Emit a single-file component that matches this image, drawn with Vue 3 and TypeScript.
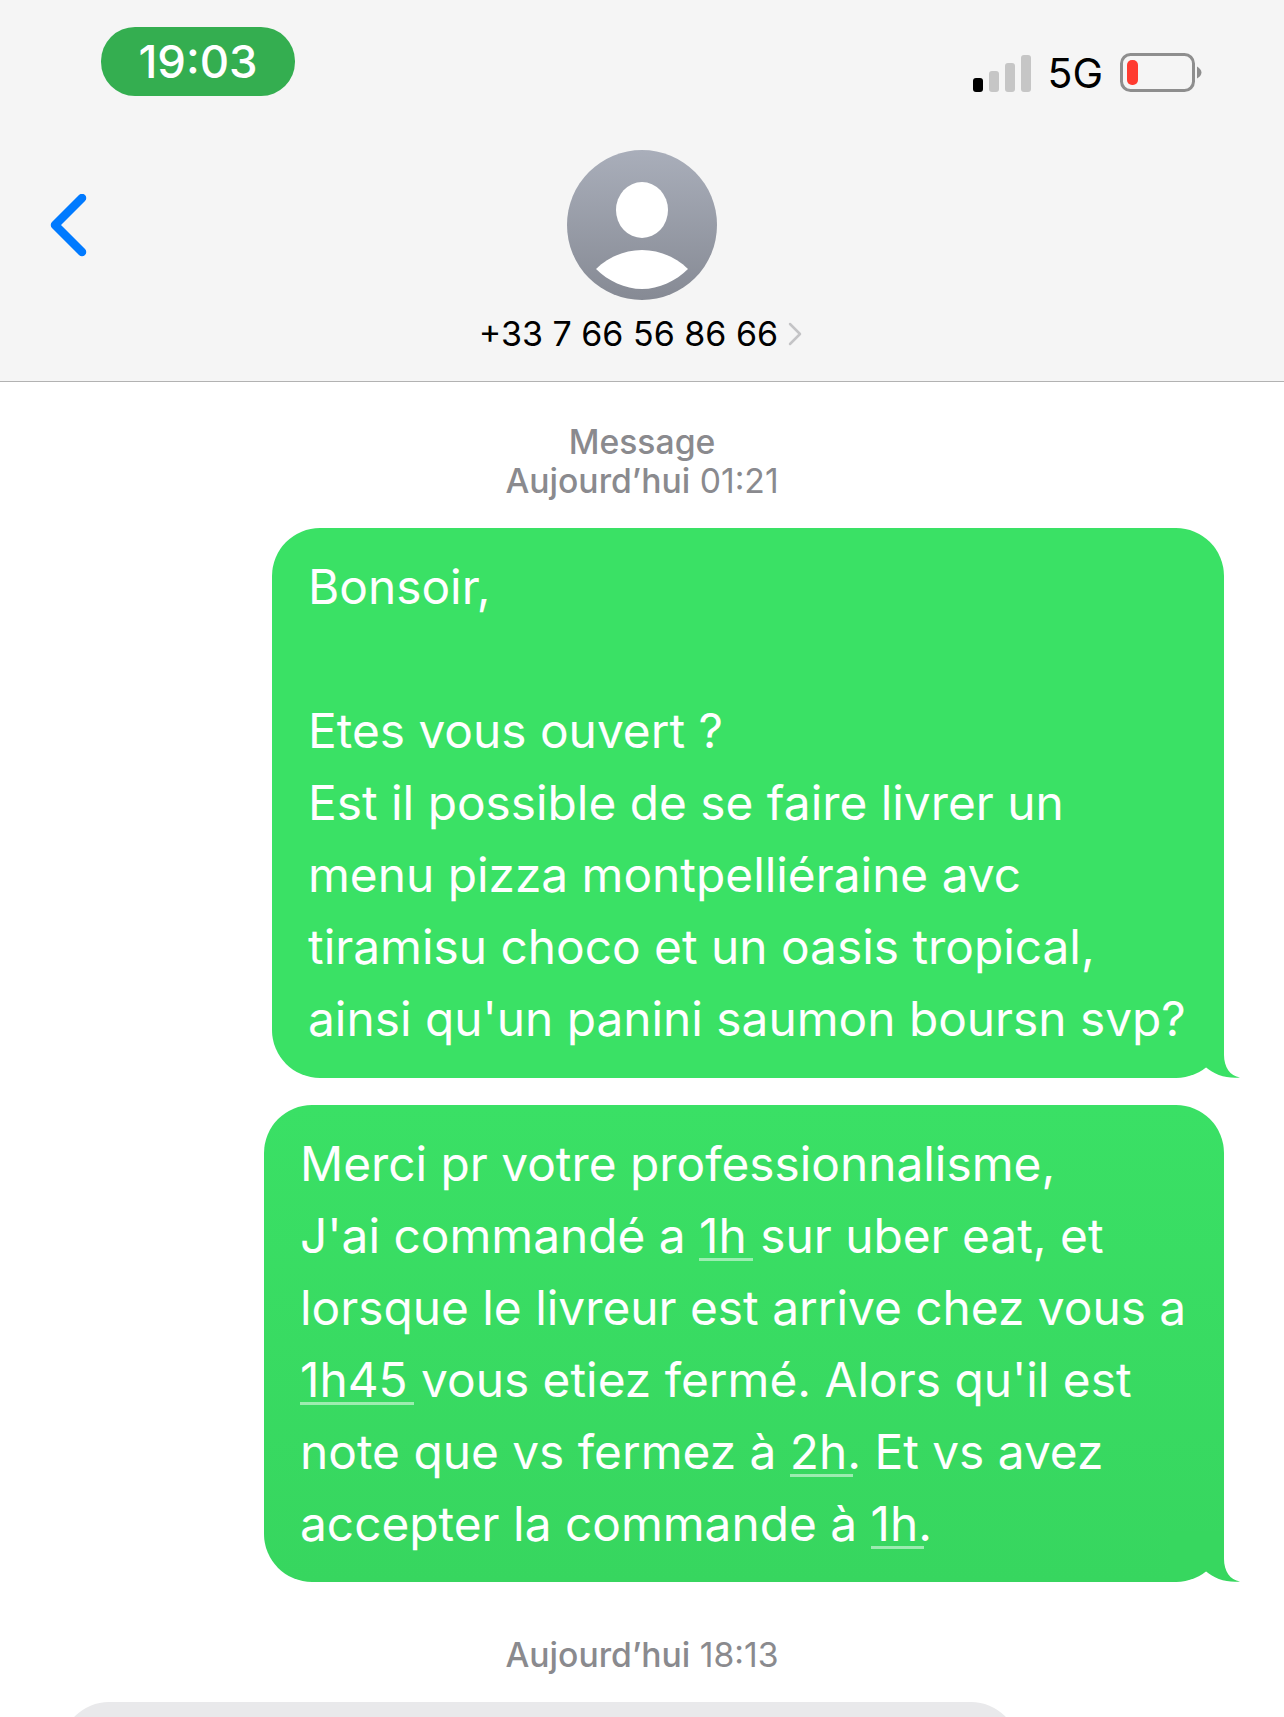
<template>
  <div class="screen">
    <header class="top">
      <div class="status">
        <div class="clock">19:03</div>
        <div class="indicators">
          <div class="signal">
            <span v-for="(h, i) in signalBars" :key="i" class="bar" :class="{ on: i === 0 }" :style="{ height: h + 'px' }"></span>
          </div>
          <span class="net">5G</span>
          <svg class="battery" width="82" height="40" viewBox="0 0 82 40">
            <rect x="1.5" y="1.5" width="72" height="36" rx="9" fill="none" stroke="#8e8e8e" stroke-width="3" />
            <rect x="7" y="7" width="11" height="25" rx="5" fill="#ff3b30" />
            <path d="M77 13.5 C79.5 15 81.5 17 81.5 19.5 C81.5 22 79.5 24 77 25.5 Z" fill="#8e8e8e" />
          </svg>
        </div>
      </div>
      <div class="contact">
        <svg class="back" width="40" height="64" viewBox="0 0 40 64">
          <path d="M34 4 L7 31 L34 58" fill="none" stroke="#007aff" stroke-width="8.5" stroke-linecap="round" stroke-linejoin="round" />
        </svg>
        <svg class="avatar" width="150" height="150" viewBox="0 0 150 150">
          <defs>
            <linearGradient id="avatarFill" x1="0" y1="0" x2="0" y2="1">
              <stop offset="0" stop-color="#a9aeba" />
              <stop offset="1" stop-color="#868a94" />
            </linearGradient>
          </defs>
          <circle cx="75" cy="75" r="75" fill="url(#avatarFill)" />
          <ellipse cx="75" cy="60" rx="26" ry="28" fill="#fff" />
          <path d="M29 119 C41 107 58 100 75 100 C92 100 109 107 121 119 C109 131 92 139 75 139 C58 139 41 131 29 119 Z" fill="#fff" />
        </svg>
        <div class="phone">
          <span>+33 7 66 56 86 66</span>
          <svg width="14" height="24" viewBox="0 0 14 24">
            <path d="M2 2 L12 12 L2 22" fill="none" stroke="#c4c4c6" stroke-width="2.5" stroke-linecap="round" stroke-linejoin="round" />
          </svg>
        </div>
      </div>
    </header>

    <main class="thread">
      <div class="meta first">
        <div><b>Message</b></div>
        <div><b>Aujourd’hui</b> 01:21</div>
      </div>

      <div class="bubble one">
        <svg class="tail" width="70" height="52" viewBox="0 0 70 52">
          <path d="M0 0 H54 V28 C54 40 60 49 70 50.5 C58 52 44 48 35 39.5 C28 46 18 50.5 0 50.5 Z" fill="#3ae165" />
        </svg>
        <div class="text">
          <div>Bonsoir,</div>
          <div>&nbsp;</div>
          <div>Etes vous ouvert ?</div>
          <div>Est il possible de se faire livrer un</div>
          <div>menu pizza montpelliéraine avc</div>
          <div>tiramisu choco et un oasis tropical,</div>
          <div>ainsi qu'un panini saumon boursn svp?</div>
        </div>
      </div>

      <div class="bubble two">
        <svg class="tail" width="70" height="52" viewBox="0 0 70 52">
          <path d="M0 0 H54 V28 C54 40 60 49 70 50.5 C58 52 44 48 35 39.5 C28 46 18 50.5 0 50.5 Z" fill="#37d75f" />
        </svg>
        <div class="text">
          <div>Merci pr votre professionnalisme,</div>
          <div>J'ai commandé a <span class="link">1h</span> sur uber eat, et</div>
          <div>lorsque le livreur est arrive chez vous a</div>
          <div><span class="link">1h45</span> vous etiez fermé. Alors qu'il est</div>
          <div>note que vs fermez à <span class="link">2h</span>. Et vs avez</div>
          <div>accepter la commande à <span class="link">1h</span>.</div>
        </div>
      </div>

      <div class="meta second">
        <div><b>Aujourd’hui</b> 18:13</div>
      </div>

      <div class="incoming"></div>
    </main>
  </div>
</template>

<script setup lang="ts">
const signalBars: number[] = [14, 21, 29, 37]
</script>

<style>
html,
body {
  margin: 0;
  background: #fff;
}
</style>

<style scoped>
.screen {
  width: 1284px;
  height: 1717px;
  overflow: hidden;
  background: #fff;
  font-family: Inter, "Liberation Sans", sans-serif;
}

.top {
  height: 382px;
  box-sizing: border-box;
  background: #f5f5f5;
  border-bottom: 1px solid #b2b2b2;
  padding-top: 27px;
}

.status {
  display: flex;
  justify-content: space-between;
  padding: 0 82px 0 101px;
}

.clock {
  width: 194px;
  height: 69px;
  border-radius: 34px;
  background: #34ae50;
  color: #fff;
  font-size: 45.5px;
  font-weight: 500;
  line-height: 69px;
  text-align: center;
}

.indicators {
  display: flex;
  align-items: center;
  height: 40px;
  margin-top: 26px;
}

.signal {
  display: flex;
  align-items: flex-end;
  gap: 6px;
  height: 37px;
}

.bar {
  width: 10px;
  border-radius: 3px;
  background: #c6c6c6;
}

.bar.on {
  background: #000;
}

.net {
  margin-left: 16px;
  font-size: 41px;
  line-height: 40px;
  color: #000;
}

.battery {
  margin-left: 17px;
}

.contact {
  position: relative;
  display: flex;
  flex-direction: column;
  align-items: center;
  margin-top: 54px;
}

.back {
  position: absolute;
  left: 48px;
  top: 44px;
}

.phone {
  display: flex;
  align-items: center;
  gap: 10px;
  margin-top: 14px;
  margin-left: -3px;
  font-size: 34px;
  line-height: 40px;
  color: #000;
}

.thread {
  display: flex;
  flex-direction: column;
  align-items: flex-end;
}

.meta {
  align-self: center;
  font-size: 33.7px;
  line-height: 39px;
  text-align: center;
  color: #8a8a8e;
}

.meta b {
  font-weight: 500;
}

.meta.first {
  margin-top: 40px;
}

.meta.second {
  margin-top: 53px;
}

.bubble {
  position: relative;
  box-sizing: border-box;
  margin-right: 60px;
  padding: 23px 0 0 36px;
  border-radius: 48px;
  color: #fff;
  font-size: 47.8px;
  line-height: 72px;
  white-space: nowrap;
}

.bubble.one {
  width: 952px;
  height: 550px;
  margin-top: 28px;
  background: #3ae165;
}

.bubble.two {
  width: 960px;
  height: 477px;
  margin-top: 27px;
  background: linear-gradient(#3ae065, #37d65f);
}

.text {
  position: relative;
}

.link {
  padding-right: 6px;
  margin-right: -6px;
  background: linear-gradient(rgba(255, 255, 255, 0.5), rgba(255, 255, 255, 0.5)) no-repeat 0 calc(100% - 4px) / 100% 3px;
}

.tail {
  position: absolute;
  right: -16px;
  bottom: -1px;
}

.incoming {
  align-self: flex-start;
  width: 958px;
  height: 120px;
  margin: 28px 0 0 61px;
  border-radius: 48px;
  background: #e9e9eb;
}
</style>
